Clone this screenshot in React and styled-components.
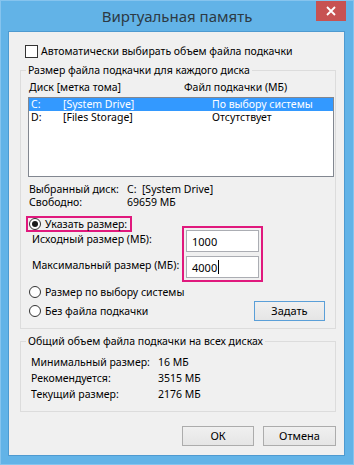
import React from 'react';
import styled, { createGlobalStyle } from 'styled-components';

const Global = createGlobalStyle`
  html, body { margin: 0; padding: 0; background: #ffffff; }
  body { font-family: "Noto Sans", "DejaVu Sans", sans-serif; }
  * { box-sizing: border-box; }
`;

const FONT = `"Noto Sans", "DejaVu Sans", sans-serif`;

const Window = styled.div`
  width: 354px;
  height: 465px;
  background: #62b3e7;
  border: 1px solid #86c4ee;
  display: flex;
  flex-direction: column;
  padding: 0 8px 8px 7px;
  overflow: hidden;
`;

const TitleBar = styled.div`
  flex-shrink: 0;
  height: 30px;
  display: grid;
  grid-template-columns: 1fr auto 1fr;
  margin: 0 -8px 0 -7px;
`;

const Title = styled.div`
  grid-column: 2;
  align-self: center;
  font-family: ${FONT};
  font-size: 15px;
  color: #2d3a44;
  line-height: 20px;
  white-space: nowrap;
`;

const Close = styled.div`
  grid-column: 3;
  justify-self: end;
  align-self: start;
  width: 30px;
  height: 20px;
  margin-right: 7px;
  background: #c75252;
  display: flex;
  align-items: center;
  justify-content: center;
`;

const Content = styled.div`
  flex: 1;
  min-height: 0;
  background: #f0f0f0;
  border: 1px solid #4e9ad0;
  padding: 12px 8px 0 11px;
  display: flex;
  flex-direction: column;
  font-family: ${FONT};
  font-size: 10.5px;
  color: #000;
  white-space: nowrap;
`;

const CheckRow = styled.label`
  display: flex;
  align-items: center;
  height: 14px;
  line-height: 14px;
  margin-left: 5px;
  gap: 3px;
`;

const CheckBox = styled.span`
  width: 13px;
  height: 13px;
  border: 1px solid #333;
  background: #fff;
`;

const Group = styled.fieldset`
  margin: ${p => p.$top}px 0 0 0;
  padding: 0 0 ${p => p.$bottom}px 0;
  border: 1px solid #dcdcdc;
  min-width: 0;
`;

const Legend = styled.legend`
  margin-left: 5px;
  padding: 0 2px;
  line-height: 16px;
  font-size: 10.5px;
`;

const HeaderRow = styled.div`
  display: flex;
  padding-left: 8px;
  margin-top: 1px;
  line-height: 16px;
`;

const Cell = styled.span`
  flex: 0 0 ${p => p.$w}px;
  width: ${p => p.$w}px;
`;

const ListBox = styled.div`
  margin: 2px 1px 0 7px;
  height: 80px;
  border: 1px solid #828790;
  background: #fff;
`;

const ListRow = styled.div`
  display: flex;
  padding-left: 2px;
  height: 13px;
  line-height: 13px;
  background: ${p => (p.$selected ? '#3399ff' : 'transparent')};
  color: ${p => (p.$selected ? '#fff' : '#000')};
`;

const InfoBlock = styled.div`
  display: flex;
  flex-direction: column;
  padding-left: ${p => p.$left}px;
  margin-top: ${p => p.$top}px;
  line-height: ${p => p.$lh}px;
`;

const InfoRow = styled.div`
  display: flex;
`;

const Highlight = styled.div`
  border: 2px solid #e0197d;
`;

const RadioLine = styled.div`
  display: flex;
`;

const RadioHighlight = styled(Highlight)`
  margin: 7px 0 0 5px;
  padding: 0 3px 0 1px;
`;

const RadioRow = styled.label`
  display: flex;
  align-items: center;
  gap: 4px;
  height: ${p => p.$h || 16}px;
  line-height: ${p => p.$h || 16}px;
`;

const Radio = styled.span`
  width: 12px;
  height: 12px;
  border-radius: 50%;
  border: 1px solid #333;
  background: #fff;
  display: flex;
  align-items: center;
  justify-content: center;
  &::after {
    content: '';
    display: ${p => (p.$checked ? 'block' : 'none')};
    width: 6px;
    height: 6px;
    border-radius: 50%;
    background: #1a1a1a;
  }
`;

const SizeSection = styled.div`
  display: flex;
  margin: -6px 0 0 11px;
`;

const SizeLabels = styled.div`
  flex: 0 0 150px;
  display: flex;
  flex-direction: column;
  padding-top: 2px;
  gap: 4px;
`;

const SizeLabel = styled.div`
  height: 22px;
  line-height: 22px;
`;

const FieldsBox = styled(Highlight)`
  padding: 2px;
  display: flex;
  flex-direction: column;
  gap: 4px;
`;

const Field = styled.div`
  width: 73px;
  height: 22px;
  border: 1px solid #abadb3;
  background: #fff;
  padding-left: 5px;
  display: flex;
  align-items: center;
  font-size: 11px;
`;

const Caret = styled.span`
  display: inline-block;
  width: 1px;
  height: 14px;
  background: #000;
  margin-left: 1px;
`;

const BottomRow = styled.div`
  display: flex;
  justify-content: space-between;
  align-items: flex-start;
  margin: 2px 10px 0 8px;
`;

const Radios = styled.div`
  display: flex;
  flex-direction: column;
  gap: 3px;
`;

const Button = styled.div`
  width: ${p => p.$w || 72}px;
  height: ${p => p.$h || 20}px;
  margin-top: ${p => p.$mt || 0}px;
  border: 1px solid ${p => (p.$default ? '#5a9fd8' : '#acacac')};
  background: linear-gradient(#f0f0f0, #e5e5e5);
  display: flex;
  align-items: center;
  justify-content: center;
  line-height: 14px;
  font-size: 11px;
`;

const Footer = styled.div`
  display: flex;
  justify-content: flex-end;
  gap: 9px;
  margin-top: 14px;
`;

const totals = [
  ['Минимальный размер:', '16 МБ'],
  ['Рекомендуется:', '3515 МБ'],
  ['Текущий размер:', '2176 МБ'],
];

export default function App() {
  return (
    <>
      <Global />
      <Window>
        <TitleBar>
          <Title>Виртуальная память</Title>
          <Close>
            <svg width="10" height="10" viewBox="0 0 10 10">
              <path d="M1 1 L9 9 M9 1 L1 9" stroke="#fff" strokeWidth="1.8" />
            </svg>
          </Close>
        </TitleBar>
        <Content>
          <CheckRow>
            <CheckBox />
            <span>Автоматически выбирать объем файла подкачки</span>
          </CheckRow>

          <Group $top={4} $bottom={7}>
            <Legend>Размер файла подкачки для каждого диска</Legend>
            <HeaderRow>
              <Cell $w={155}>Диск [метка тома]</Cell>
              <span>Файл подкачки (МБ)</span>
            </HeaderRow>
            <ListBox>
              <ListRow $selected>
                <Cell $w={32}>C:</Cell>
                <Cell $w={149}>[System Drive]</Cell>
                <span>По выбору системы</span>
              </ListRow>
              <ListRow>
                <Cell $w={32}>D:</Cell>
                <Cell $w={149}>[Files Storage]</Cell>
                <span>Отсутствует</span>
              </ListRow>
            </ListBox>
            <InfoBlock $left={8} $top={6} $lh={13}>
              <InfoRow>
                <Cell $w={98}>Выбранный диск:</Cell>
                <span>C:&nbsp;&nbsp;[System Drive]</span>
              </InfoRow>
              <InfoRow>
                <Cell $w={98}>Свободно:</Cell>
                <span>69659 МБ</span>
              </InfoRow>
            </InfoBlock>
            <RadioLine>
              <RadioHighlight>
                <RadioRow $h={12}>
                  <Radio $checked />
                  <span>Указать размер:</span>
                </RadioRow>
              </RadioHighlight>
            </RadioLine>
            <SizeSection>
              <SizeLabels>
                <SizeLabel>Исходный размер (МБ):</SizeLabel>
                <SizeLabel>Максимальный размер (МБ):</SizeLabel>
              </SizeLabels>
              <FieldsBox>
                <Field>1000</Field>
                <Field>
                  4000
                  <Caret />
                </Field>
              </FieldsBox>
            </SizeSection>
            <BottomRow>
              <Radios>
                <RadioRow>
                  <Radio />
                  <span>Размер по выбору системы</span>
                </RadioRow>
                <RadioRow>
                  <Radio />
                  <span>Без файла подкачки</span>
                </RadioRow>
              </Radios>
              <Button $w={71} $mt={17} $default>
                Задать
              </Button>
            </BottomRow>
          </Group>

          <Group $top={4} $bottom={9}>
            <Legend>Общий объем файла подкачки на всех дисках</Legend>
            <InfoBlock $left={10} $top={5} $lh={16}>
              {totals.map(([label, value]) => (
                <InfoRow key={label}>
                  <Cell $w={127}>{label}</Cell>
                  <span>{value}</span>
                </InfoRow>
              ))}
            </InfoBlock>
          </Group>

          <Footer>
            <Button>ОК</Button>
            <Button $w={73}>Отмена</Button>
          </Footer>
        </Content>
      </Window>
    </>
  );
}
